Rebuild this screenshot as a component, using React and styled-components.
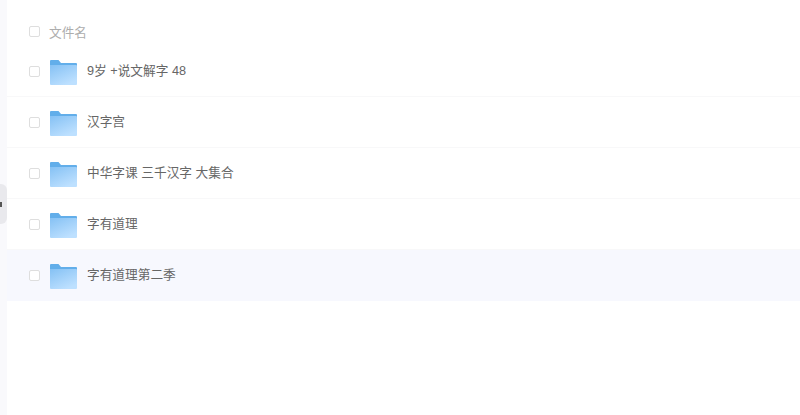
import React from 'react'
import styled, { createGlobalStyle } from 'styled-components'

const Global = createGlobalStyle`
  html, body { margin: 0; padding: 0; background: #fff; overflow: hidden; }
  body { font-family: "Liberation Sans", "Noto Sans CJK SC", sans-serif; }
`

const Page = styled.div`
  display: flex;
  width: 800px;
  height: 415px;
  overflow: hidden;
`

const Side = styled.aside`
  position: relative;
  flex: 0 0 7px;
  background: #f9f9fc;
`

const Handle = styled.div`
  position: absolute;
  top: 184px;
  left: 0;
  width: 7px;
  height: 40px;
  display: flex;
  align-items: center;
  background: #e9e9ed;
  border-radius: 0 6px 6px 0;

  &::before {
    content: '';
    width: 2px;
    height: 5px;
    background: #555;
  }
`

const List = styled.main`
  flex: 1;
  padding-top: 16px;
`

const Header = styled.div`
  display: flex;
  align-items: center;
  height: 30px;
  padding-left: 22px;
  gap: 9px;
  font-size: 12.7px;
  color: #adadad;

  span + span {
    padding-top: 1px;
  }
`

const Check = styled.span`
  flex: none;
  box-sizing: border-box;
  width: 11px;
  height: 11px;
  background: #fff;
  border: 1px solid #dedede;
  border-radius: 2px;
`

const Row = styled.div`
  display: flex;
  align-items: center;
  height: 51px;
  box-sizing: border-box;
  padding-left: 22px;
  background: ${p => (p.$active ? '#f7f8fe' : '#fff')};
  border-bottom: 1px solid ${p => (p.$active ? '#f7f8fe' : '#f8f8f9')};
`

const Name = styled.span`
  margin-left: 10px;
  font-size: 12.7px;
  line-height: 20px;
  color: #666;
  white-space: pre;
`

const FolderBox = styled.svg`
  flex: none;
  display: block;
  margin: 2px 0 0 10px;
`

let gradientId = 0

const Folder = () => {
  const id = `fold${gradientId++}`
  return (
    <FolderBox width="27" height="25" viewBox="0 0 27 25">
      <defs>
        <linearGradient id={id} x1="0" y1="0" x2="0.6" y2="1">
          <stop offset="0" stopColor="#85c1f4" />
          <stop offset="1" stopColor="#bde0ff" />
        </linearGradient>
      </defs>
      <path d="M1 0h7.5l2.5 3H26a1 1 0 0 1 1 1v4H0V1a1 1 0 0 1 1-1z" fill="#62aeea" />
      <path d="M0 5h26a1 1 0 0 1 1 1v18a1 1 0 0 1-1 1H1a1 1 0 0 1-1-1z" fill={`url(#${id})`} />
    </FolderBox>
  )
}

const files = [
  '9岁 +说文解字 48',
  '汉字宫',
  '中华字课 三千汉字 大集合',
  '字有道理',
  '字有道理第二季',
]

const App = () => (
  <Page>
    <Global />
    <Side>
      <Handle />
    </Side>
    <List>
      <Header>
        <Check />
        <span>文件名</span>
      </Header>
      {files.map((name, i) => (
        <Row key={name} $active={i === files.length - 1}>
          <Check />
          <Folder />
          <Name>{name}</Name>
        </Row>
      ))}
    </List>
  </Page>
)

export default App
